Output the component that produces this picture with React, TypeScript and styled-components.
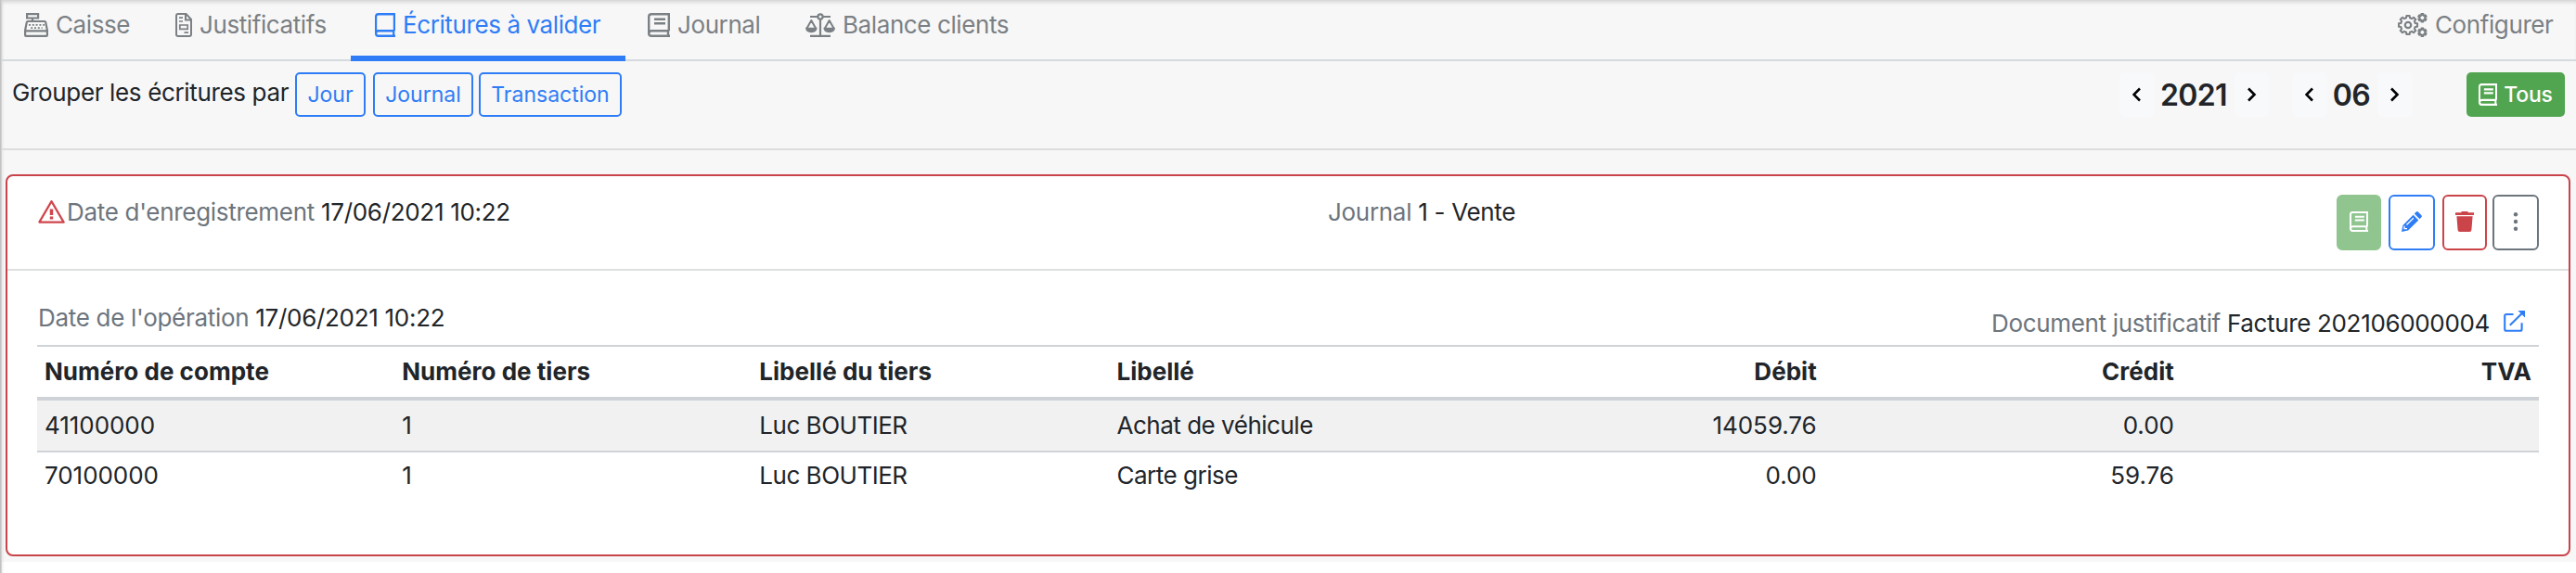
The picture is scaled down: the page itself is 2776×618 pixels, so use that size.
import React from "react";
import styled, { createGlobalStyle } from "styled-components";

const Global = createGlobalStyle`
  *{box-sizing:border-box}
  body{margin:0;background:#fff;font-family:Inter,"Liberation Sans",sans-serif;font-size:26px;line-height:39px;letter-spacing:-.3px;color:#212529;overflow:hidden}
`;
const Page = styled.div`
  height:618px;padding-left:2px;display:flex;flex-direction:column;
  background:linear-gradient(90deg,#c2c2c2 0 1px,#d2d2d2 1px 2px,rgba(0,0,0,.06) 2px,transparent 5px),linear-gradient(#f7f7f7 0 606px,#fff 606px);
`;
const Nav = styled.nav`
  height:66px;flex:none;display:flex;align-items:stretch;border-bottom:2px solid #d5dadd;
  box-shadow:inset 0 4px 4px -2px #cfcfcf;
`;
const Tab = styled.a<{ $w: number; $active?: boolean; $right?: boolean }>`
  width:${p => p.$w}px;height:66px;padding:7px 0 0 ${p => (p.$active ? 26 : 24)}px;display:flex;gap:8px;white-space:nowrap;letter-spacing:-.4px;
  color:${p => (p.$active ? "#2f7df6" : "#7b8084")};
  border-bottom:${p => (p.$active ? "6px solid #2f7df6" : "none")};
  margin-left:${p => (p.$right ? "auto" : "0")};
  svg{flex:none;margin-top:7px}
`;
const Filters = styled.div`
  height:96px;flex:none;border-bottom:2px solid #dcdddd;display:flex;align-items:flex-start;padding:12px 12px 0 11px;
`;
const GroupLabel = styled.span`margin-top:2px;width:305px;white-space:nowrap;letter-spacing:-.35px;`;
const Btn = styled.button<{ $w: number; $ml?: number }>`
  width:${p => p.$w}px;height:48px;margin:0 0 0 ${p => p.$ml ?? 0}px;padding:0;border:2px solid #2f7df6;border-radius:5px;
  background:transparent;color:#2f7df6;font:23px/43px Inter,sans-serif;
`;
const Step = styled.button<{ $w: number }>`
  width:${p => p.$w}px;height:48px;padding:0;border:0;border-radius:6px;background:#f8f9fa;color:#000;
  display:flex;align-items:center;justify-content:center;
`;
const Period = styled.strong<{ $w: number }>`
  width:${p => p.$w}px;padding-right:2px;text-align:center;font-size:32px;font-weight:600;line-height:50px;letter-spacing:-.6px;
`;
const Spacer = styled.div<{ $w?: number }>`${p => (p.$w ? `width:${p.$w}px` : "flex:1")};`;
const AllBtn = styled.button`
  width:106px;height:48px;padding:0;margin:0;border:0;border-radius:5px;background:#52a550;color:#fff;font:500 23px/48px Inter,sans-serif;
  letter-spacing:-.2px;display:flex;align-items:center;justify-content:center;gap:7px;
`;
const Card = styled.section`
  margin:26px 6px 0 4px;height:412px;flex:none;border:2px solid #c9434a;border-radius:8px;background:#fff;
`;
const CardHead = styled.header`
  height:102px;border-bottom:2px solid #dedfdf;padding:20px 32px 0;display:flex;
`;
const HeadCol = styled.div<{ $w: number }>`
  width:${p => p.$w}px;display:flex;white-space:nowrap;margin-top:-1px;
  svg{flex:none;margin:7px 2px 0 1px}
`;
const Muted = styled.span`color:#6c757d;margin-right:7px;`;
const Actions = styled.div`margin-left:auto;display:flex;`;
const Action = styled.button<{ $w: number; $c: string; $ml: number; $fill?: boolean }>`
  width:${p => p.$w}px;height:60px;margin:0 0 0 ${p => p.$ml}px;padding:0 0 2px;border:2px solid ${p => p.$c};border-radius:6px;
  background:${p => (p.$fill ? p.$c : "#fff")};color:${p => (p.$fill ? "#fff" : p.$c)};
  display:flex;align-items:center;justify-content:center;
`;
const Body = styled.div`padding:0 32px;`;
const Operation = styled.div`
  height:80px;display:flex;justify-content:space-between;padding:31px 0 0 1px;white-space:nowrap;
`;
const Doc = styled.div`display:flex;padding:6px 15px 0 0;letter-spacing:-.34px;svg{margin:6px 0 0 15px}`;
const Table = styled.table`width:100%;border-collapse:separate;border-spacing:0;table-layout:fixed;`;
const Th = styled.th<{ $r?: boolean }>`
  height:60px;padding:0 8px 2px;border-top:2px solid #cfd3d7;border-bottom:4px solid #cfd3d7;
  font-weight:700;letter-spacing:.03px;text-align:${p => (p.$r ? "right" : "left")};
`;
const Tr = styled.tr<{ $odd?: boolean }>`
  td{background:${p => (p.$odd ? "#f1f1f1" : "#fff")};border-bottom:${p => (p.$odd ? "2px solid #cfd3d7" : "none")};
  height:${p => (p.$odd ? 56 : 52)}px;padding-bottom:${p => (p.$odd ? 2 : 4)}px}
`;
const Td = styled.td<{ $r?: boolean; $num?: boolean }>`
  padding:0 8px;text-align:${p => (p.$r ? "right" : "left")};letter-spacing:${p => (p.$num ? "-.05px" : "-.48px")};
`;

const Book = ({ w, h, lines = true }: { w: number; h: number; lines?: boolean }) => (
  <svg width={w} height={h} viewBox="0 0 24 26" preserveAspectRatio="none" fill="none" stroke="currentColor" strokeWidth="2.4">
    <path d="M22.8 19.3V1.2H4Q1.2 1.2 1.2 4v18q0 2.8 2.8 2.8h20M1.4 21.5Q2 19.3 4 19.3h18.8M22 19.3v5.5" />
    {lines && <path d="M7 6.8h12M7 11.2h12" />}
  </svg>
);
const Register = () => (
  <svg width="26" height="26" viewBox="0 0 26 26" fill="none" stroke="currentColor" strokeWidth="2.2">
    <path d="M3.1 1.1h12v4.4h-12zM9 5.5v4M1.1 24v-5.3L2.8 10q.2-1 1.2-1h18q1 0 1.2 1l1.7 8.7V24q0 .9-.9.9H2q-.9 0-.9-.9zM1.1 19.4h23.8" />
    <path d="M5 12.9h17M7.2 16.2h12.5" strokeWidth="1.8" strokeDasharray="2 1.8" />
  </svg>
);
const Invoice = () => (
  <svg width="18" height="26" viewBox="0 0 18 26" fill="none" stroke="currentColor" strokeWidth="2">
    <path d="M1 3q0-2 2-2h8.5L17 6.8V23q0 2-2 2H3q-2 0-2-2zM11 1v6.5h6" />
    <path d="M4 5.2h4M4 9h4M9.5 21.2H14M4.8 13h8.4v4.4H4.8z" strokeWidth="1.7" />
  </svg>
);
const Scale = () => (
  <svg width="32" height="26" viewBox="0 0 32 26" fill="none" stroke="currentColor" strokeWidth="2.2">
    <circle cx="16" cy="4" r="2.6" />
    <path d="M5 4h8.4M18.6 4H27M16 6.6V25M5 24.8h22" />
    <path d="M1.5 16.5 6.3 8l4.8 8.5M20.9 16.5 25.7 8l4.8 8.5" strokeWidth="2" strokeLinejoin="round" />
    <path d="M0 15.8h12.6q0 5.4-6.3 5.4T0 15.8zM19.4 15.8H32q0 5.4-6.3 5.4t-6.3-5.4z" fill="currentColor" stroke="none" />
  </svg>
);
const gear = (cx: number, cy: number, r: number, R: number, n: number) => {
  const pts: string[] = [];
  for (let i = 0; i < n; i++) {
    [[-0.32, r], [-0.2, R], [0.2, R], [0.32, r]].forEach(([o, q]) => {
      const a = ((i + o) / n) * Math.PI * 2 - Math.PI / 2;
      pts.push(`${(cx + q * Math.cos(a)).toFixed(2)} ${(cy + q * Math.sin(a)).toFixed(2)}`);
    });
  }
  return `M${pts.join("L")}Z`;
};
const Gears = () => (
  <svg width="32" height="26" viewBox="0 0 32 26" fill="none" stroke="currentColor" strokeLinejoin="round">
    <path d={gear(11, 13, 8, 10.2, 8)} strokeWidth="2.1" />
    <circle cx="11" cy="13" r="3.2" strokeWidth="2.2" />
    <path d={gear(26.4, 5.2, 2.9, 4.3, 6)} strokeWidth="2.1" />
    <path d={gear(26.4, 20.8, 2.9, 4.3, 6)} strokeWidth="2.1" />
  </svg>
);
const Warning = () => (
  <svg width="29" height="25" viewBox="0 0 30 25" preserveAspectRatio="none" fill="none" stroke="#d0454c" strokeWidth="2.3" strokeLinejoin="round">
    <path d="M15 1.2 28.6 23.6H1.4z" />
    <path d="M15 9.5v6.4M15 17.4v3" strokeWidth="3.6" />
  </svg>
);
const Chevron = ({ next }: { next?: boolean }) => (
  <svg width="10" height="16" viewBox="0 0 10 16" fill="none" stroke="currentColor" strokeWidth="2.6">
    <path d={next ? "M1 1.5 7.5 8 1 14.5" : "M8 1.5 1.5 8 8 14.5"} />
  </svg>
);
const Pencil = () => (
  <svg width="22" height="22" viewBox="0 0 22 22" fill="currentColor">
    <path d="M12.6 3.7 18.3 9.4 7.1 20.6 0 22l1.4-7.1zM13.8 2.5 15.6.7q1.2-1.2 2.5 0l3.2 3.2q1.2 1.3 0 2.5l-1.8 1.8z" />
    <path d="M5.5 14.5 12.8 7.2M3 15.8v2.9h3" fill="none" stroke="#fff" strokeWidth="1.3" />
  </svg>
);
const Trash = () => (
  <svg width="20" height="22" viewBox="0 0 20 22" fill="currentColor">
    <path d="M0 1.3h6L7 0h6l1 1.3h6V4H0zM1.4 5.3h17.2L17.4 20q-.2 2-2 2H4.6q-1.8 0-2-2z" />
  </svg>
);
const Dots = () => (
  <svg width="6" height="22" viewBox="0 0 6 22" fill="currentColor">
    <circle cx="3" cy="3.2" r="2.2" /><circle cx="3" cy="11" r="2.2" /><circle cx="3" cy="18.8" r="2.2" />
  </svg>
);
const External = () => (
  <svg width="23" height="23" viewBox="0 0 23 23" fill="none" stroke="#2f7df6" strokeWidth="2.1">
    <path d="M10.5 4H3Q1.2 4 1.2 5.8v14.1q0 1.8 1.8 1.8h14.8q1.8 0 1.8-1.8v-6.7M6.8 15.8 20.5 2.2" />
    <path d="M15.4 0H23v7.6z" fill="#2f7df6" stroke="none" />
  </svg>
);

const heads = ["Numéro de compte", "Numéro de tiers", "Libellé du tiers", "Libellé", "Débit", "Crédit", "TVA"];
const rows = [
  ["41100000", "1", "Luc BOUTIER", "Achat de véhicule", "14059.76", "0.00", ""],
  ["70100000", "1", "Luc BOUTIER", "Carte grise", "0.00", "59.76", ""],
];

export default function App() {
  return (
    <Page>
      <Global />
      <Nav>
        <Tab $w={163}><Register />Caisse</Tab>
        <Tab $w={213}><Invoice />Justificatifs</Tab>
        <Tab $w={296} $active><Book w={22} h={26} lines={false} />Écritures à valider</Tab>
        <Tab $w={170}><Book w={24} h={26} />Journal</Tab>
        <Tab $w={270}><Scale />Balance clients</Tab>
        <Tab $w={216} $right><Gears />Configurer</Tab>
      </Nav>
      <Filters>
        <GroupLabel>Grouper les écritures par</GroupLabel>
        <Btn $w={76}>Jour</Btn>
        <Btn $w={108} $ml={8}>Journal</Btn>
        <Btn $w={154} $ml={6}>Transaction</Btn>
        <Spacer />
        <Step $w={38}><Chevron /></Step>
        <Period $w={86}>2021</Period>
        <Step $w={37}><Chevron next /></Step>
        <Spacer $w={25} />
        <Step $w={38}><Chevron /></Step>
        <Period $w={54}>06</Period>
        <Step $w={38}><Chevron next /></Step>
        <Spacer $w={58} />
        <AllBtn><Book w={20} h={24} />Tous</AllBtn>
      </Filters>
      <Card>
        <CardHead>
          <HeadCol $w={1391}><Warning /><Muted>Date d'enregistrement</Muted>17/06/2021 10:22</HeadCol>
          <HeadCol $w={400}><Muted>Journal</Muted>1 - Vente</HeadCol>
          <Actions>
            <Action $w={48} $c="#90c590" $ml={0} $fill><Book w={20} h={22} /></Action>
            <Action $w={50} $c="#2f7df6" $ml={8}><Pencil /></Action>
            <Action $w={48} $c="#cb444a" $ml={8}><Trash /></Action>
            <Action $w={50} $c="#6c757d" $ml={6}><Dots /></Action>
          </Actions>
        </CardHead>
        <Body>
          <Operation>
            <div><Muted>Date de l'opération</Muted>17/06/2021 10:22</div>
            <Doc><Muted>Document justificatif</Muted>Facture 202106000004<External /></Doc>
          </Operation>
          <Table>
            <thead><tr>{heads.map((h, i) => <Th key={h} $r={i > 3}>{h}</Th>)}</tr></thead>
            <tbody>
              {rows.map((r, n) => (
                <Tr key={r[0]} $odd={n === 0}>
                  {r.map((c, i) => <Td key={i} $r={i > 3} $num={i !== 2 && i !== 3}>{c}</Td>)}
                </Tr>
              ))}
            </tbody>
          </Table>
        </Body>
      </Card>
    </Page>
  );
}
